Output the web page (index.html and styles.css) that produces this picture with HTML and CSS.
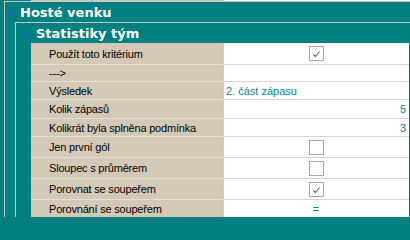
FILE: index.html
```html
<!DOCTYPE html>
<html lang="cs">
<head>
<meta charset="utf-8">
<title>Statistiky tým</title>
<link rel="stylesheet" href="styles.css">
</head>
<body>
<div class="screen">
  <div class="prev-row"><div class="lbl"></div><div class="val"></div></div>
  <div class="group outer">
    <div class="group-head">
      <svg class="chev" width="7" height="5" viewBox="0 0 7 5"><polyline points="0.6,0.6 3.5,3.6 6.4,0.6" fill="none" stroke="#2a62d0" stroke-width="1.6"/></svg>
      <span>Hosté venku</span>
    </div>
    <div class="group inner">
      <div class="group-head">
        <svg class="chev" width="7" height="5" viewBox="0 0 7 5"><polyline points="0.6,0.6 3.5,3.6 6.4,0.6" fill="none" stroke="#2a62d0" stroke-width="1.6"/></svg>
        <span>Statistiky tým</span>
      </div>
      <div class="grid">
        <div class="row r-check r-first"><div class="lbl">Použít toto kritérium</div><div class="val center"><span class="cb checked"><svg width="9" height="8" viewBox="0 0 9 8"><polyline points="1.5,4.5 3.4,6.5 7.5,1.5" fill="none" stroke="#606060" stroke-width="1.1"/></svg></span></div></div>
        <div class="row r-text r-short"><div class="lbl">---&gt;</div><div class="val"></div></div>
        <div class="row r-text"><div class="lbl">Výsledek</div><div class="val">2. část zápasu</div></div>
        <div class="row r-text r-tall"><div class="lbl">Kolik zápasů</div><div class="val right">5</div></div>
        <div class="row r-text"><div class="lbl">Kolikrát byla splněna podmínka</div><div class="val right">3</div></div>
        <div class="row r-check"><div class="lbl">Jen první gól</div><div class="val center"><span class="cb"></span></div></div>
        <div class="row r-check"><div class="lbl">Sloupec s průměrem</div><div class="val center"><span class="cb"></span></div></div>
        <div class="row r-check"><div class="lbl">Porovnat se soupeřem</div><div class="val center"><span class="cb checked"><svg width="9" height="8" viewBox="0 0 9 8"><polyline points="1.5,4.5 3.4,6.5 7.5,1.5" fill="none" stroke="#606060" stroke-width="1.1"/></svg></span></div></div>
        <div class="row r-text"><div class="lbl">Porovnání se soupeřem</div><div class="val center">=</div></div>
      </div>
    </div>
  </div>
</div>
</body>
</html>
```

FILE: styles.css
```css
html, body {
  margin: 0;
  padding: 0;
}
body {
  background: #008080;
  width: 410px;
  height: 217px;
  overflow: hidden;
}
.screen {
  width: 410px;
  height: 217px;
  overflow: hidden;
  background: #008080;
  font-family: "Liberation Sans", Arial, sans-serif;
}
.prev-row {
  display: grid;
  grid-template-columns: 193px 186px;
  margin-left: 31px;
  height: 1px;
}
.prev-row .lbl {
  background: #d4c9b7;
  border-right: 1px solid #c8c8c8;
}
.prev-row .val {
  background: #ffffff;
}
.group {
  border-top: 1px solid #c6c6c6;
  border-left: 1px solid #c6c6c6;
}
.outer {
  margin-left: 4px;
}
.inner {
  margin-left: 10px;
}
.group-head {
  height: 20px;
  display: flex;
  align-items: center;
  color: #ffffff;
  font-family: "DejaVu Sans", Verdana, sans-serif;
  font-weight: bold;
  font-size: 13px;
}
.outer > .group-head {
  padding-left: 2px;
}
.inner > .group-head {
  padding-left: 6px;
}
.chev {
  margin-top: 3px;
  margin-right: 6px;
  flex: none;
}
.inner > .group-head .chev {
  margin-right: 7px;
}
.grid {
  margin-left: 15px;
}
.row {
  display: grid;
  grid-template-columns: 193px 185px;
  font-size: 11px;
  letter-spacing: -0.2px;
  color: #000000;
}
.row > div {
  border-bottom: 1px solid #d4d4d4;
  display: flex;
  align-items: center;
  white-space: nowrap;
}
.row .lbl {
  background: #d4c9b7;
  border-right: 1px solid #cfcfcf;
  padding-left: 18px;
  border-bottom-color: #e2ded8;
}
.row .val {
  background: #ffffff;
  color: #0a8290;
  padding-left: 2px;
  padding-right: 3px;
  letter-spacing: 0;
}
.row .val.right {
  justify-content: flex-end;
}
.row .val.center {
  justify-content: center;
  padding-left: 0;
  padding-right: 1px;
}
.r-text {
  height: 18px;
}
.r-short {
  height: 17px;
}
.r-tall {
  height: 19px;
}
.r-check {
  height: 21px;
}
.r-first {
  height: 22px;
}
.cb {
  width: 13px;
  height: 13px;
  border: 1px solid #a8a8a8;
  background: #ffffff;
  display: flex;
  align-items: center;
  justify-content: center;
}
.cb svg {
  margin-top: 1px;
}
```
